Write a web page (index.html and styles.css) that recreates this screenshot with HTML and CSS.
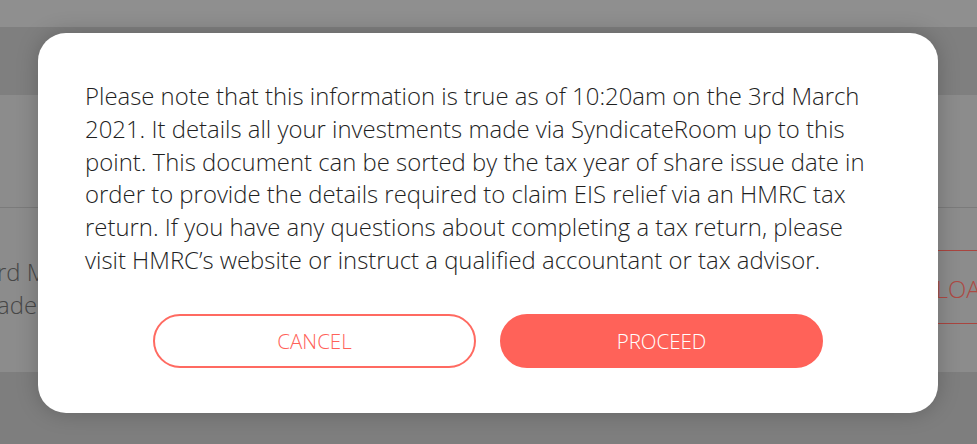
FILE: index.html
```html
<!DOCTYPE html>
<html lang="en">
<head>
<meta charset="utf-8">
<title>EIS statement</title>
<link rel="stylesheet" href="styles.css">
</head>
<body>
<div class="page">
  <div class="topbar"></div>
  <div class="band"></div>
  <div class="content">
    <div class="content-head"></div>
    <div class="row">
      <div class="row-text">
        <p>rd March 2021</p>
        <p>ade via SyndicateRoom</p>
      </div>
      <div class="row-action">
        <span class="dl-btn">DOWNLOAD</span>
      </div>
    </div>
  </div>
  <div class="footer"></div>
</div>

<div class="modal">
  <p class="modal-text">Please note that this information is true as of 10:20am on the 3rd March 2021. It details all your investments made via SyndicateRoom up to this point. This document can be sorted by the tax year of share issue date in order to provide the details required to claim EIS relief via an HMRC tax return. If you have any questions about completing a tax return, please visit HMRC’s website or instruct a qualified accountant or tax advisor.</p>
  <div class="modal-actions">
    <button class="btn btn-outline">CANCEL</button>
    <button class="btn btn-solid">PROCEED</button>
  </div>
</div>
</body>
</html>
```
FILE: styles.css
```css
* { box-sizing: border-box; }
html, body { margin: 0; padding: 0; }
body {
  width: 977px;
  height: 444px;
  overflow: hidden;
  font-family: "Open Sans", "Liberation Sans", sans-serif;
  background: #8c8c8c;
  position: relative;
}
.page {
  display: flex;
  flex-direction: column;
  height: 444px;
}
.topbar { height: 27px; background: #8f8f8f; }
.band { height: 68px; background: #7f7f7f; }
.content {
  height: 277px;
  background: #8c8c8c;
  display: flex;
  flex-direction: column;
}
.content-head {
  height: 113px;
  border-bottom: 1px solid #7b7b7b;
}
.row {
  flex: 1;
  display: flex;
  justify-content: space-between;
  align-items: flex-start;
  overflow: hidden;
}
.row-text {
  margin-left: -3px;
  margin-top: 47px;
  font-weight: 300;
  font-size: 23.9px;
  line-height: 33px;
  color: #474747;
  white-space: nowrap;
}
.row-text p { margin: 0; }
.row-action { margin-right: -85px; margin-top: 42px; }
.dl-btn {
  display: block;
  width: 200px;
  height: 74px;
  line-height: 76px;
  border-top: 1.5px solid #a9453f;
  border-bottom: 1.5px solid #a9453f;
  color: #ad4a44;
  font-weight: 300;
  font-size: 23.9px;
  text-align: left;
  padding-left: 0;
  white-space: nowrap;
}
.footer { flex: 1; background: #7e7e7e; }

.modal {
  position: absolute;
  left: 38px;
  top: 33px;
  width: 900px;
  height: 380px;
  background: #fff;
  border-radius: 28px;
  box-shadow: 0 0 22px rgba(0, 0, 0, 0.22);
  padding: 47px 53px 45px 47px;
  display: flex;
  flex-direction: column;
}
.modal-text {
  margin: 0;
  font-weight: 300;
  font-size: 23.9px;
  line-height: 32.8px;
  color: #1f1f1f;
}
.modal-actions {
  margin-top: auto;
  margin-right: -6px;
  display: flex;
  justify-content: center;
  gap: 24px;
}
.btn {
  width: 323px;
  height: 54px;
  border-radius: 27px;
  font-family: "Open Sans", "Liberation Sans", sans-serif;
  font-weight: 300;
  font-size: 20.5px;
  letter-spacing: 0;
  cursor: pointer;
}
.btn-outline {
  background: #fff;
  border: 2px solid #ff6a61;
  color: #ff6259;
}
.btn-solid {
  background: #ff6259;
  border: 2px solid #ff6259;
  color: #fff;
}
```
